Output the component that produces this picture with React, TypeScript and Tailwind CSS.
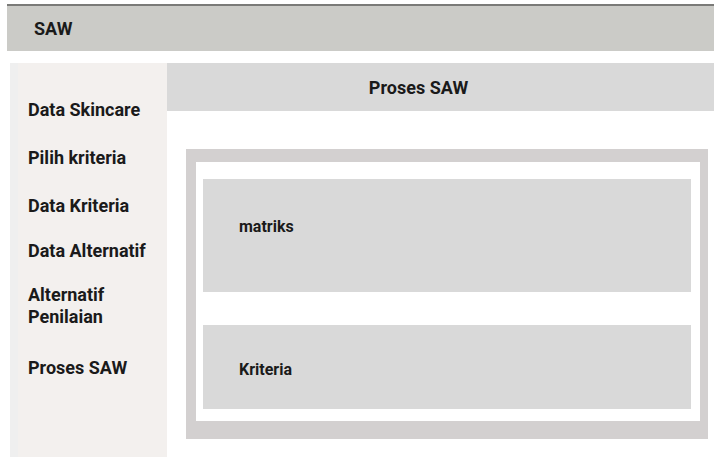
const menu = [
  { label: "Data Skincare", cls: "mt-[36px]" },
  { label: "Pilih kriteria", cls: "mt-[26px]" },
  { label: "Data Kriteria", cls: "mt-[26px]" },
  { label: "Data Alternatif", cls: "mt-[23px]" },
  { label: "Alternatif\nPenilaian", cls: "mt-[22px] whitespace-pre-line" },
  { label: "Proses SAW", cls: "mt-[29px]" },
];

const App = () => {
  return (
    <div className="w-[714px] h-[457px] bg-white overflow-hidden flex flex-col font-['Roboto',sans-serif] text-[#1a1a1a]">
      <header className="ml-[7px] mt-[4px] h-[47px] shrink-0 border-t-2 border-[#7a7a78] bg-[#cbcbc7] flex items-center pl-[27px]">
        <span className="text-[18px] font-bold">SAW</span>
      </header>

      <div className="flex flex-1 mt-[12px] pl-[10px]">
        <aside className="w-[157px] bg-[#f3f0ee] border-l-[8px] border-[#efefef] pl-[10px] flex flex-col">
          {menu.map((item) => (
            <div key={item.label} className={`text-[18px] font-bold leading-[22px] ${item.cls}`}>
              {item.label}
            </div>
          ))}
        </aside>

        <main className="flex-1 flex flex-col">
          <div className="h-[48px] bg-[#d9d9d9] flex items-center justify-center pr-[44px]">
            <span className="text-[18px] font-bold">Proses SAW</span>
          </div>

          <div className="mt-[38px] ml-[19px] mr-[6px] bg-[#d3d0d0] pt-[13px] pb-[18px] pl-[10px] pr-[8px]">
            <div className="bg-white pt-[17px] pb-[12px] pl-[7px] pr-[9px] flex flex-col gap-[33px]">
              <div className="h-[113px] bg-[#d9d9d9] pl-[36px] pt-[36px]">
                <span className="text-[16px] font-bold">matriks</span>
              </div>
              <div className="h-[84px] bg-[#d9d9d9] pl-[36px] pt-[33px]">
                <span className="text-[16px] font-bold">Kriteria</span>
              </div>
            </div>
          </div>
        </main>
      </div>
    </div>
  );
};

export default App;
